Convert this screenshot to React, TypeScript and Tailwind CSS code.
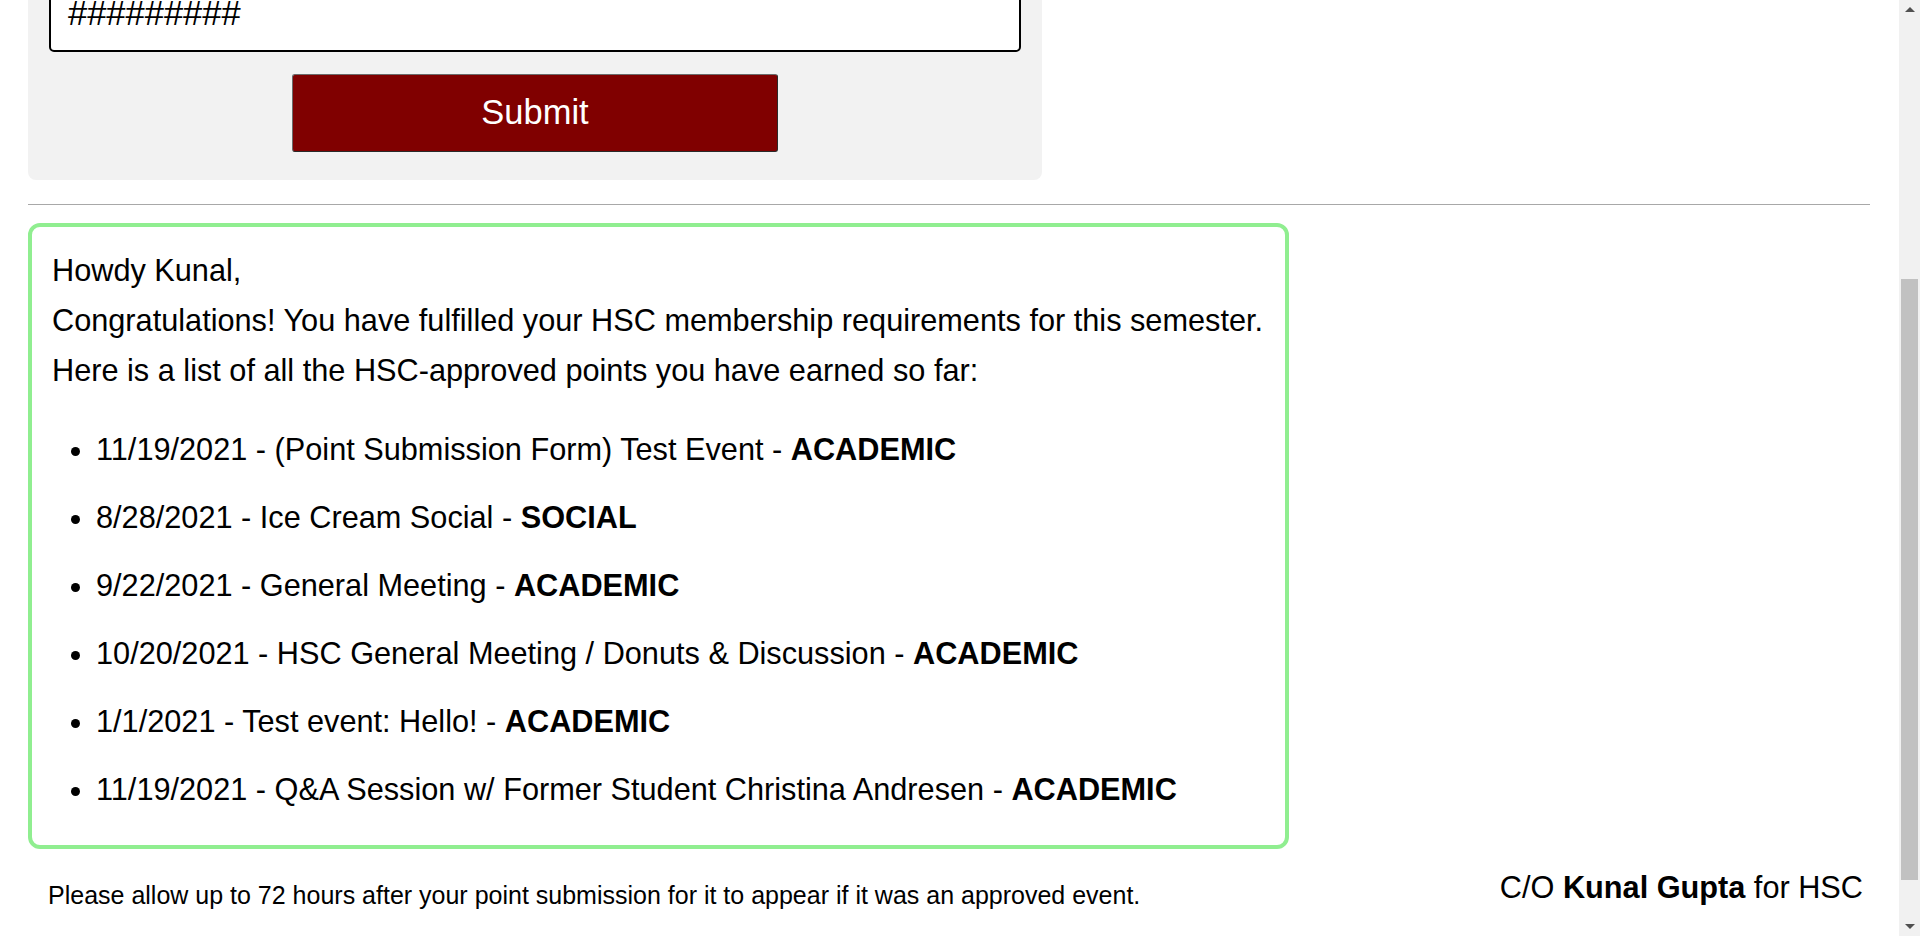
import React from "react";

type PointEntry = { date: string; title: string; category: string };

const POINTS: PointEntry[] = [
  { date: "11/19/2021", title: "(Point Submission Form) Test Event", category: "ACADEMIC" },
  { date: "8/28/2021", title: "Ice Cream Social", category: "SOCIAL" },
  { date: "9/22/2021", title: "General Meeting", category: "ACADEMIC" },
  { date: "10/20/2021", title: "HSC General Meeting / Donuts & Discussion", category: "ACADEMIC" },
  { date: "1/1/2021", title: "Test event: Hello!", category: "ACADEMIC" },
  { date: "11/19/2021", title: "Q&A Session w/ Former Student Christina Andresen", category: "ACADEMIC" },
];

// 表单：只露出输入框底部和提交按钮
const SubmitPanel = () => (
  <div className="mt-[-60px] w-[1014px] rounded-lg bg-[#f2f2f2] px-[21px] pt-[21px] pb-[28px]">
    <div className="h-[91px] rounded-[5px] border-2 border-black bg-white pl-[17px] pt-[30px] text-[34.5px] leading-[40px] text-black">
      #########
    </div>
    <div className="mt-[22px] flex justify-center">
      <button className="h-[78px] w-[486px] rounded-[3px] border border-[#6b6b6b] border-b-[#2a2a2a] border-r-[#2a2a2a] bg-[#800000] text-[34.5px] text-white">
        Submit
      </button>
    </div>
  </div>
);

const PointsBox = ({ name }: { name: string }) => (
  <div className="mt-[18px] w-[1261px] rounded-[12px] border-4 border-[#90ee90] bg-white pl-[20px] pt-[19px] pb-[21px] text-[30.7px] text-black">
    <div className="leading-[50px]">Howdy {name},</div>
    <div className="leading-[50px]">
      Congratulations! You have fulfilled your HSC membership requirements for this semester.
    </div>
    <div className="leading-[50px]">Here is a list of all the HSC-approved points you have earned so far:</div>
    <ul className="mt-[20px] list-disc pl-[44px]">
      {POINTS.map((p, i) => (
        <li key={i} className="h-[68px] leading-[68px] whitespace-nowrap">
          {`${p.date} - ${p.title} - `}
          <span className="font-bold">{p.category}</span>
        </li>
      ))}
    </ul>
  </div>
);

const FakeScrollbar = () => (
  <div className="flex h-full w-[21px] flex-col items-center bg-[#f1f1f1]">
    <div className="mt-[7px] h-0 w-0 border-x-[5px] border-b-[5px] border-x-transparent border-b-[#505050]" />
    <div className="mt-[267px] h-[601px] w-[17px] bg-[#c1c1c1]" />
    <div className="mt-[44px] h-0 w-0 border-x-[5px] border-t-[5px] border-x-transparent border-t-[#505050]" />
  </div>
);

export default function App() {
  return (
    <div className="flex h-[936px] w-full overflow-hidden bg-white font-['Liberation_Sans',Arial,sans-serif] text-black">
      <div className="flex-1 pl-[28px] pr-[29px]">
        <SubmitPanel />
        <hr className="mt-[24px] h-0 border-0 border-t border-[#a8a8a8]" />
        <PointsBox name="Kunal" />
        <div className="flex items-start justify-between">
          <p className="mt-[28px] pl-[20px] text-[25px]">
            Please allow up to 72 hours after your point submission for it to appear if it was an approved event.
          </p>
          <p className="mt-[16px] pr-[7px] text-[30.7px]">
            C/O <span className="font-bold">Kunal Gupta</span> for HSC
          </p>
        </div>
      </div>
      <FakeScrollbar />
    </div>
  );
}
